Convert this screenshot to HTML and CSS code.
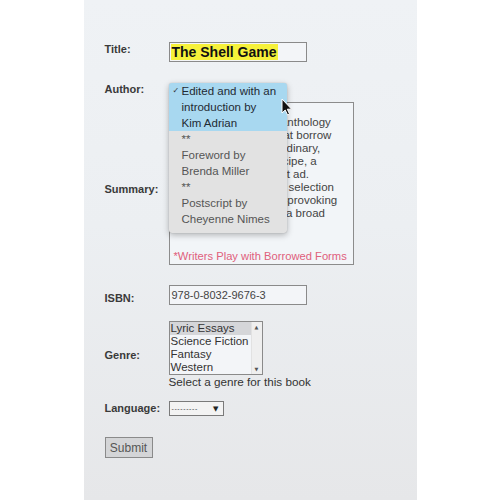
FILE: index.html
```html
<!DOCTYPE html>
<html lang="en">
<head>
<meta charset="utf-8">
<title>Book form</title>
<link rel="stylesheet" href="styles.css">
</head>
<body>
<div class="panel">
  <form class="form">
    <div class="row row-title">
      <label class="label">Title:</label>
      <div class="field">
        <div class="input"><span class="hl">The Shell Game</span></div>
      </div>
    </div>

    <div class="row row-author">
      <label class="label">Author:</label>
      <div class="field author-field">
        <div class="popup">
          <div class="opt opt-sel"><span class="check">✓</span>Edited and with an<br>introduction by<br>Kim Adrian</div>
          <div class="opt">**</div>
          <div class="opt">Foreword by<br>Brenda Miller</div>
          <div class="opt">**</div>
          <div class="opt">Postscript by<br>Cheyenne Nimes</div>
        </div>
        <svg class="cursor" width="12" height="18" viewBox="0 0 12 18">
          <path d="M1 1 L1 15 L4.2 12 L6.6 17 L8.6 16.1 L6.3 11.2 L10.6 11.2 Z" fill="#111" stroke="#fff" stroke-width="1" stroke-linejoin="round"/>
        </svg>
      </div>
    </div>

    <div class="row row-summary">
      <label class="label">Summary:</label>
      <div class="field">
        <div class="textarea">
          <div class="tl">The Shell Game is</div>
          <div class="tl">a delightfully original anthology</div>
          <div class="tl">of inventive essays that borrow</div>
          <div class="tl">their forms from the ordinary,</div>
          <div class="tl">things, such as the recipe, a</div>
          <div class="tl">a to-do list, or the want ad.</div>
          <div class="tl">This is a wide-ranging selection</div>
          <div class="tl">of playful and thought-provoking</div>
          <div class="tl">essays which explore a broad</div>
          <div class="tl">range of subjects.</div>
          <div class="note">*Writers Play with Borrowed Forms</div>
        </div>
      </div>
    </div>

    <div class="row row-isbn">
      <label class="label">ISBN:</label>
      <div class="field">
        <div class="input isbn">978-0-8032-9676-3</div>
      </div>
    </div>

    <div class="row row-genre">
      <label class="label">Genre:</label>
      <div class="field">
        <div class="listbox">
          <div class="items">
            <div class="item item-sel">Lyric Essays</div>
            <div class="item">Science Fiction</div>
            <div class="item">Fantasy</div>
            <div class="item">Western</div>
          </div>
          <div class="scrollbar"><span class="arr">▲</span><span class="arr">▼</span></div>
        </div>
        <div class="help">Select a genre for this book</div>
      </div>
    </div>

    <div class="row row-lang">
      <label class="label">Language:</label>
      <div class="field">
        <div class="select"><span class="dashes">---------</span><span class="caret">▼</span></div>
      </div>
    </div>

    <div class="actions">
      <button type="button" class="submit">Submit</button>
    </div>
  </form>
</div>
</body>
</html>
```

FILE: styles.css
```css
html, body {
  margin: 0;
  padding: 0;
  background: #ffffff;
}

body {
  font-family: "Liberation Sans", Arial, sans-serif;
  color: #333;
}

.panel {
  width: 333px;
  min-height: 500px;
  margin: 0 auto;
  box-sizing: border-box;
  padding: 42px 0 0 21px;
  background: linear-gradient(180deg, #eff2f5 0%, #eceff2 45%, #e6e7e9 100%);
}

.form {
  display: flex;
  flex-direction: column;
}

.row {
  display: grid;
  grid-template-columns: 64px auto;
  align-items: center;
}

.label {
  font-size: 11px;
  font-weight: bold;
  color: #3a3a3a;
  line-height: 13px;
}

.field {
  display: flex;
  flex-direction: column;
  align-items: flex-start;
}

/* title */
.row-title .label {
  align-self: start;
  padding-top: 1px;
}

.input {
  width: 138px;
  height: 20px;
  box-sizing: border-box;
  border: 1px solid #8a8a8a;
  background: #f3f5f8;
  padding: 1px 1px;
  display: flex;
  align-items: center;
}

.hl {
  background: #f6f13a;
  font-size: 14px;
  font-weight: bold;
  color: #111;
  line-height: 16px;
  padding: 0 1px;
}

/* author */
.row-author {
  margin-top: 21px;
  height: 19px;
}

.row-author .label {
  align-self: start;
}

.author-field {
  position: relative;
  height: 19px;
}

.popup {
  position: absolute;
  left: 0;
  top: 0;
  width: 118px;
  z-index: 5;
  background: #e2e2e2;
  border-radius: 3px;
  box-shadow: 0 2px 6px rgba(0, 0, 0, 0.28), 0 0 1px rgba(0, 0, 0, 0.3);
  padding-bottom: 6px;
  font-size: 11.5px;
  line-height: 16px;
  color: #555;
  overflow: hidden;
}

.opt {
  padding-left: 13px;
  position: relative;
}

.opt-sel {
  background: #a8d8f0;
  color: #1f2a33;
}

.check {
  position: absolute;
  left: 4px;
  top: 0;
  font-family: "DejaVu Sans", sans-serif;
  font-size: 8px;
  color: #333;
}

.cursor {
  position: absolute;
  left: 112px;
  top: 15px;
  z-index: 6;
}

/* summary */
.row-summary .label {
  padding-top: 11px;
}

.textarea {
  width: 185px;
  box-sizing: border-box;
  border: 1px solid #8c8c8c;
  background: #f2f5f8;
  padding: 0 3px 1px 4px;
  font-size: 11.5px;
  line-height: 13px;
  color: #444;
  white-space: nowrap;
  overflow: hidden;
}

.note {
  margin-top: 17px;
  font-size: 11.2px;
  color: #e0607c;
}

/* isbn */
.row-isbn {
  margin-top: 20px;
}

.row-isbn .label {
  padding-top: 6px;
}

.isbn {
  font-size: 11px;
  color: #444;
  padding-left: 2px;
}

/* genre */
.row-genre {
  margin-top: 16px;
}

.listbox {
  width: 94px;
  height: 54px;
  box-sizing: border-box;
  border: 1px solid #8a8a8a;
  background: #f3f5f8;
  display: flex;
}

.items {
  flex: 1;
  overflow: hidden;
}

.item {
  font-size: 11.5px;
  line-height: 13px;
  color: #333;
  padding-left: 1px;
  white-space: nowrap;
}

.item-sel {
  background: #d5d6d9;
}

.scrollbar {
  width: 10px;
  background: #efefef;
  border-left: 1px solid #e2e2e2;
  display: flex;
  flex-direction: column;
  justify-content: space-between;
  align-items: center;
  padding: 2px 0;
}

.arr {
  font-family: "DejaVu Sans", sans-serif;
  font-size: 5px;
  line-height: 6px;
  color: #555;
}

.help {
  font-size: 11.7px;
  line-height: 14px;
  color: #333;
}

/* language */
.row-lang {
  margin-top: 12px;
}

.select {
  width: 55px;
  height: 15px;
  box-sizing: border-box;
  border: 1px solid #7a7a7a;
  background: #f3f3f3;
  display: flex;
  align-items: center;
  justify-content: space-between;
  padding: 0 4px 0 2px;
}

.dashes {
  font-size: 7px;
  letter-spacing: 0.6px;
  color: #444;
}

.caret {
  font-family: "DejaVu Sans", sans-serif;
  font-size: 7px;
  color: #222;
}

/* submit */
.actions {
  margin-top: 21px;
}

.submit {
  width: 48px;
  height: 21px;
  box-sizing: border-box;
  border: 1px solid #8a8a8a;
  border-radius: 0;
  background: #d4d5d7;
  color: #555;
  font-family: "Liberation Sans", Arial, sans-serif;
  font-size: 12px;
  padding: 0;
}
```
